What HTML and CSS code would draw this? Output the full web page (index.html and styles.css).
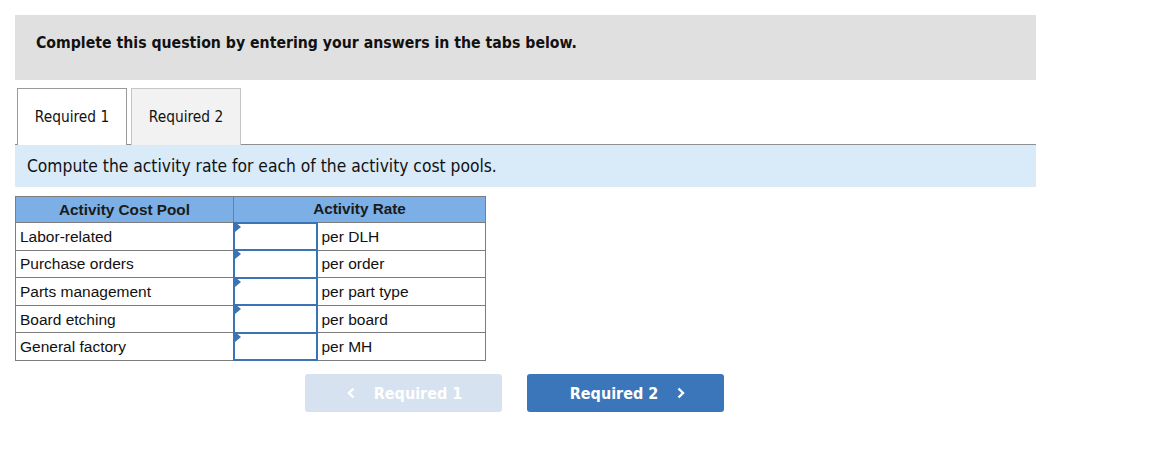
FILE: index.html
```html
<!DOCTYPE html>
<html>
<head>
<meta charset="utf-8">
<link rel="stylesheet" href="styles.css">
</head>
<body>
<div class="page">
  <div class="banner">Complete this question by entering your answers in the tabs below.</div>
  <div class="tabs">
    <div class="tab active">Required 1</div>
    <div class="tab">Required 2</div>
  </div>
  <div class="instr">Compute the activity rate for each of the activity cost pools.</div>
  <table class="grid">
    <thead>
      <tr><th class="c1">Activity Cost Pool</th><th colspan="2">Activity Rate</th></tr>
    </thead>
    <tbody>
      <tr><td class="c1">Labor-related</td><td class="inp"><span class="mark"></span></td><td class="unit">per DLH</td></tr>
      <tr><td class="c1">Purchase orders</td><td class="inp"><span class="mark"></span></td><td class="unit">per order</td></tr>
      <tr><td class="c1">Parts management</td><td class="inp"><span class="mark"></span></td><td class="unit">per part type</td></tr>
      <tr><td class="c1">Board etching</td><td class="inp"><span class="mark"></span></td><td class="unit">per board</td></tr>
      <tr><td class="c1">General factory</td><td class="inp"><span class="mark"></span></td><td class="unit">per MH</td></tr>
    </tbody>
  </table>
  <div class="nav">
    <div class="btn disabled"><svg class="chev l" width="8" height="12" viewBox="0 0 8 12"><path d="M6.5 1.5 L2 6 L6.5 10.5" fill="none" stroke="#fff" stroke-width="2.4"/></svg>Required 1</div>
    <div class="btn primary">Required 2<svg class="chev r" width="8" height="12" viewBox="0 0 8 12"><path d="M1.5 1.5 L6 6 L1.5 10.5" fill="none" stroke="#fff" stroke-width="2.4"/></svg></div>
  </div>
</div>
</body>
</html>
```

FILE: styles.css
```css
html, body { margin: 0; padding: 0; background: #fff; }
.page { padding: 15px 0 0 15px; width: 1021px; font-family: "DejaVu Sans Condensed", "DejaVu Sans", sans-serif; color: #111; }
.banner { background: #e0e0e0; height: 65px; box-sizing: border-box; padding: 18px 0 0 21px; font-weight: bold; font-size: 15.7px; }
.tabs { display: flex; gap: 4px; margin-top: 8px; padding-left: 2px; border-bottom: 1px solid #8f8f8f; height: 57px; box-sizing: border-box; }
.tab { width: 110px; height: 57px; box-sizing: border-box; border: 1px solid #c6c6c6; border-bottom: none; background: #f2f2f2; font-size: 15.3px; display: flex; align-items: center; justify-content: center; color: #111; }
.tab.active { background: #fff; border-color: #9a9a9a; height: 57px; margin-bottom: -1px; }
.instr { background: #d9eaf8; height: 42px; box-sizing: border-box; padding: 11px 0 0 12px; font-size: 17.3px; color: #111; }
.grid { margin-top: 9px; border-collapse: collapse; font-family: "Liberation Sans", Arial, sans-serif; font-size: 15.5px; color: #111; }
.grid th { background: #7bafe5; height: 26px; box-sizing: border-box; border: 1px solid #7d7d7d; font-weight: bold; font-size: 15.3px; color: #1a1a1a; padding: 0; }
.grid td { border: 1px solid #7d7d7d; height: 27.6px; box-sizing: border-box; padding: 1px 4px 0; }
.grid .c1 { width: 218px; }
.grid td.inp { width: 83px; padding: 0; border: 2px solid #3a74b6; position: relative; }
.mark { position: absolute; left: 0; top: 0; width: 0; height: 0; border-top: 5px solid transparent; border-bottom: 5px solid transparent; border-left: 6px solid #3a74b6; transform: translate(0, -2px); }
.grid td.unit { width: 169px; }
.nav { display: flex; gap: 25px; margin: 13px 0 0 290px; }
.btn { width: 197px; height: 38px; border-radius: 3px; display: flex; align-items: center; justify-content: center; font-family: "DejaVu Sans Condensed", "DejaVu Sans", sans-serif; font-weight: bold; font-size: 16px; color: #fff; }
.btn.disabled { background: #d6e2f0; }
.btn.primary { background: #3a76b9; }
.chev { display: block; }
.chev.l { margin-right: 19px; margin-left: 2px; }
.chev.r { margin-left: 19px; margin-right: -4px; }
```
